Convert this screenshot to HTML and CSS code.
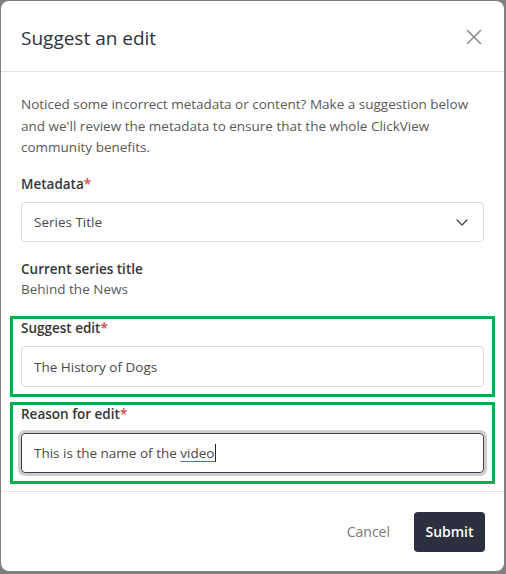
FILE: index.html
```html
<!DOCTYPE html>
<html>
<head>
<meta charset="utf-8">
<link rel="stylesheet" href="styles.css">
</head>
<body>
<div class="modal">
  <div class="modal-header">
    <h2 class="modal-title">Suggest an edit</h2>
    <button class="close-btn" aria-label="Close">
      <svg width="16" height="16" viewBox="0 0 16 16"><path d="M1.5 1.5 L14.5 14.5 M14.5 1.5 L1.5 14.5" stroke="#8a8a8a" stroke-width="1.5" fill="none" stroke-linecap="round"/></svg>
    </button>
  </div>
  <div class="modal-body">
    <p class="intro">Noticed some incorrect metadata or content? Make a suggestion below and we'll review the metadata to ensure that the whole ClickView community benefits.</p>
    <div class="label meta-label">Metadata<span class="req">*</span></div>
    <div class="select">
      <span>Series Title</span>
      <svg width="12" height="7" viewBox="0 0 12 7"><path d="M1 1 L6 6 L11 1" stroke="#444" stroke-width="1.3" fill="none" stroke-linecap="round" stroke-linejoin="round"/></svg>
    </div>
    <div class="label current-label">Current series title</div>
    <div class="current-value">Behind the News</div>
    <div class="highlight first">
      <div class="label tight">Suggest edit<span class="req">*</span></div>
      <div class="input"><span>The History of Dogs</span></div>
    </div>
    <div class="highlight second">
      <div class="label tight">Reason for edit<span class="req">*</span></div>
      <div class="input focused"><span class="value">This is the name of the <span class="spell">video</span></span><span class="caret"></span></div>
    </div>
  </div>
  <div class="modal-footer">
    <button class="btn-cancel">Cancel</button>
    <button class="btn-submit">Submit</button>
  </div>
</div>
</body>
</html>
```
FILE: styles.css
```css
html, body {
  margin: 0;
  padding: 0;
}
body {
  background: #808080;
  width: 506px;
  height: 574px;
  overflow: hidden;
  font-family: "Open Sans", "Noto Sans", sans-serif;
}
.modal {
  margin: 1px 2px 0 1px;
  width: 503px;
  height: 570px;
  background: #fff;
  border-radius: 8px;
  display: flex;
  flex-direction: column;
}
.modal-header {
  height: 71px;
  border-bottom: 1px solid #e3e3e3;
  display: flex;
  align-items: center;
  justify-content: space-between;
  padding: 0 20px;
  box-sizing: content-box;
}
.modal-title {
  margin: 0;
  font-size: 19px;
  font-weight: 500;
  color: #2e3240;
  padding-top: 3px;
}
.close-btn {
  border: 0;
  background: none;
  padding: 0;
  margin-right: 2px;
  margin-top: 2px;
  display: flex;
}
.modal-body {
  padding: 22px 20px 7px;
  flex: 1;
}
.intro {
  margin: 0;
  font-size: 13.5px;
  line-height: 21.5px;
  color: #595959;
}
.label {
  font-size: 13.5px;
  font-weight: 600;
  color: #363636;
  line-height: 20px;
  margin-top: 16.5px;
}
.label.meta-label {
  margin-top: 15.5px;
}
.label.tight {
  margin-top: 0;
  line-height: 18px;
}
.req {
  color: #e04848;
}
.select {
  margin-top: 8px;
  height: 38px;
  border: 1px solid #dcdcdc;
  border-radius: 4px;
  display: flex;
  align-items: center;
  justify-content: space-between;
  padding: 0 15px 0 12px;
  font-size: 13.5px;
  color: #4a4a4a;
}
.current-label {
  margin-top: 17px;
}
.current-value {
  font-size: 13.5px;
  color: #595959;
  line-height: 21px;
}
.highlight {
  margin: 0 -11px;
  border: 3px solid #00b050;
  padding: 0 8px 7px;
}
.highlight.first {
  margin-top: 16px;
}
.highlight.second {
  margin-top: 5px;
  padding-bottom: 8px;
}
.input {
  margin-top: 9px;
  height: 39px;
  border: 1px solid #dcdcdc;
  border-radius: 4px;
  display: flex;
  align-items: center;
  padding: 0 12px;
  font-size: 13.5px;
  color: #4a4a4a;
}
.input.focused {
  border-color: #3b3f4c;
  box-shadow: 0 0 0 3px #cfcfcf;
  height: 38px;
  margin-top: 10px;
}
.value {
  white-space: pre;
}
.spell {
  text-decoration: underline;
  text-decoration-color: #4a6ee0;
  text-underline-offset: 3px;
}
.caret {
  display: inline-block;
  width: 1px;
  height: 18px;
  background: #222;
  margin-left: 1px;
}
.modal-footer {
  border-top: 1px solid #e3e3e3;
  height: 80px;
  display: flex;
  align-items: center;
  justify-content: flex-end;
  padding: 0 19px 0 20px;
}
.btn-cancel {
  border: 0;
  background: none;
  font-family: inherit;
  font-size: 14px;
  color: #7a7a7a;
  padding: 0 12px;
  margin-right: 12px;
}
.btn-submit {
  border: 0;
  background: #2c2f3d;
  color: #fff;
  font-family: inherit;
  font-size: 14px;
  font-weight: 600;
  height: 40px;
  width: 71px;
  border-radius: 4px;
}
```
